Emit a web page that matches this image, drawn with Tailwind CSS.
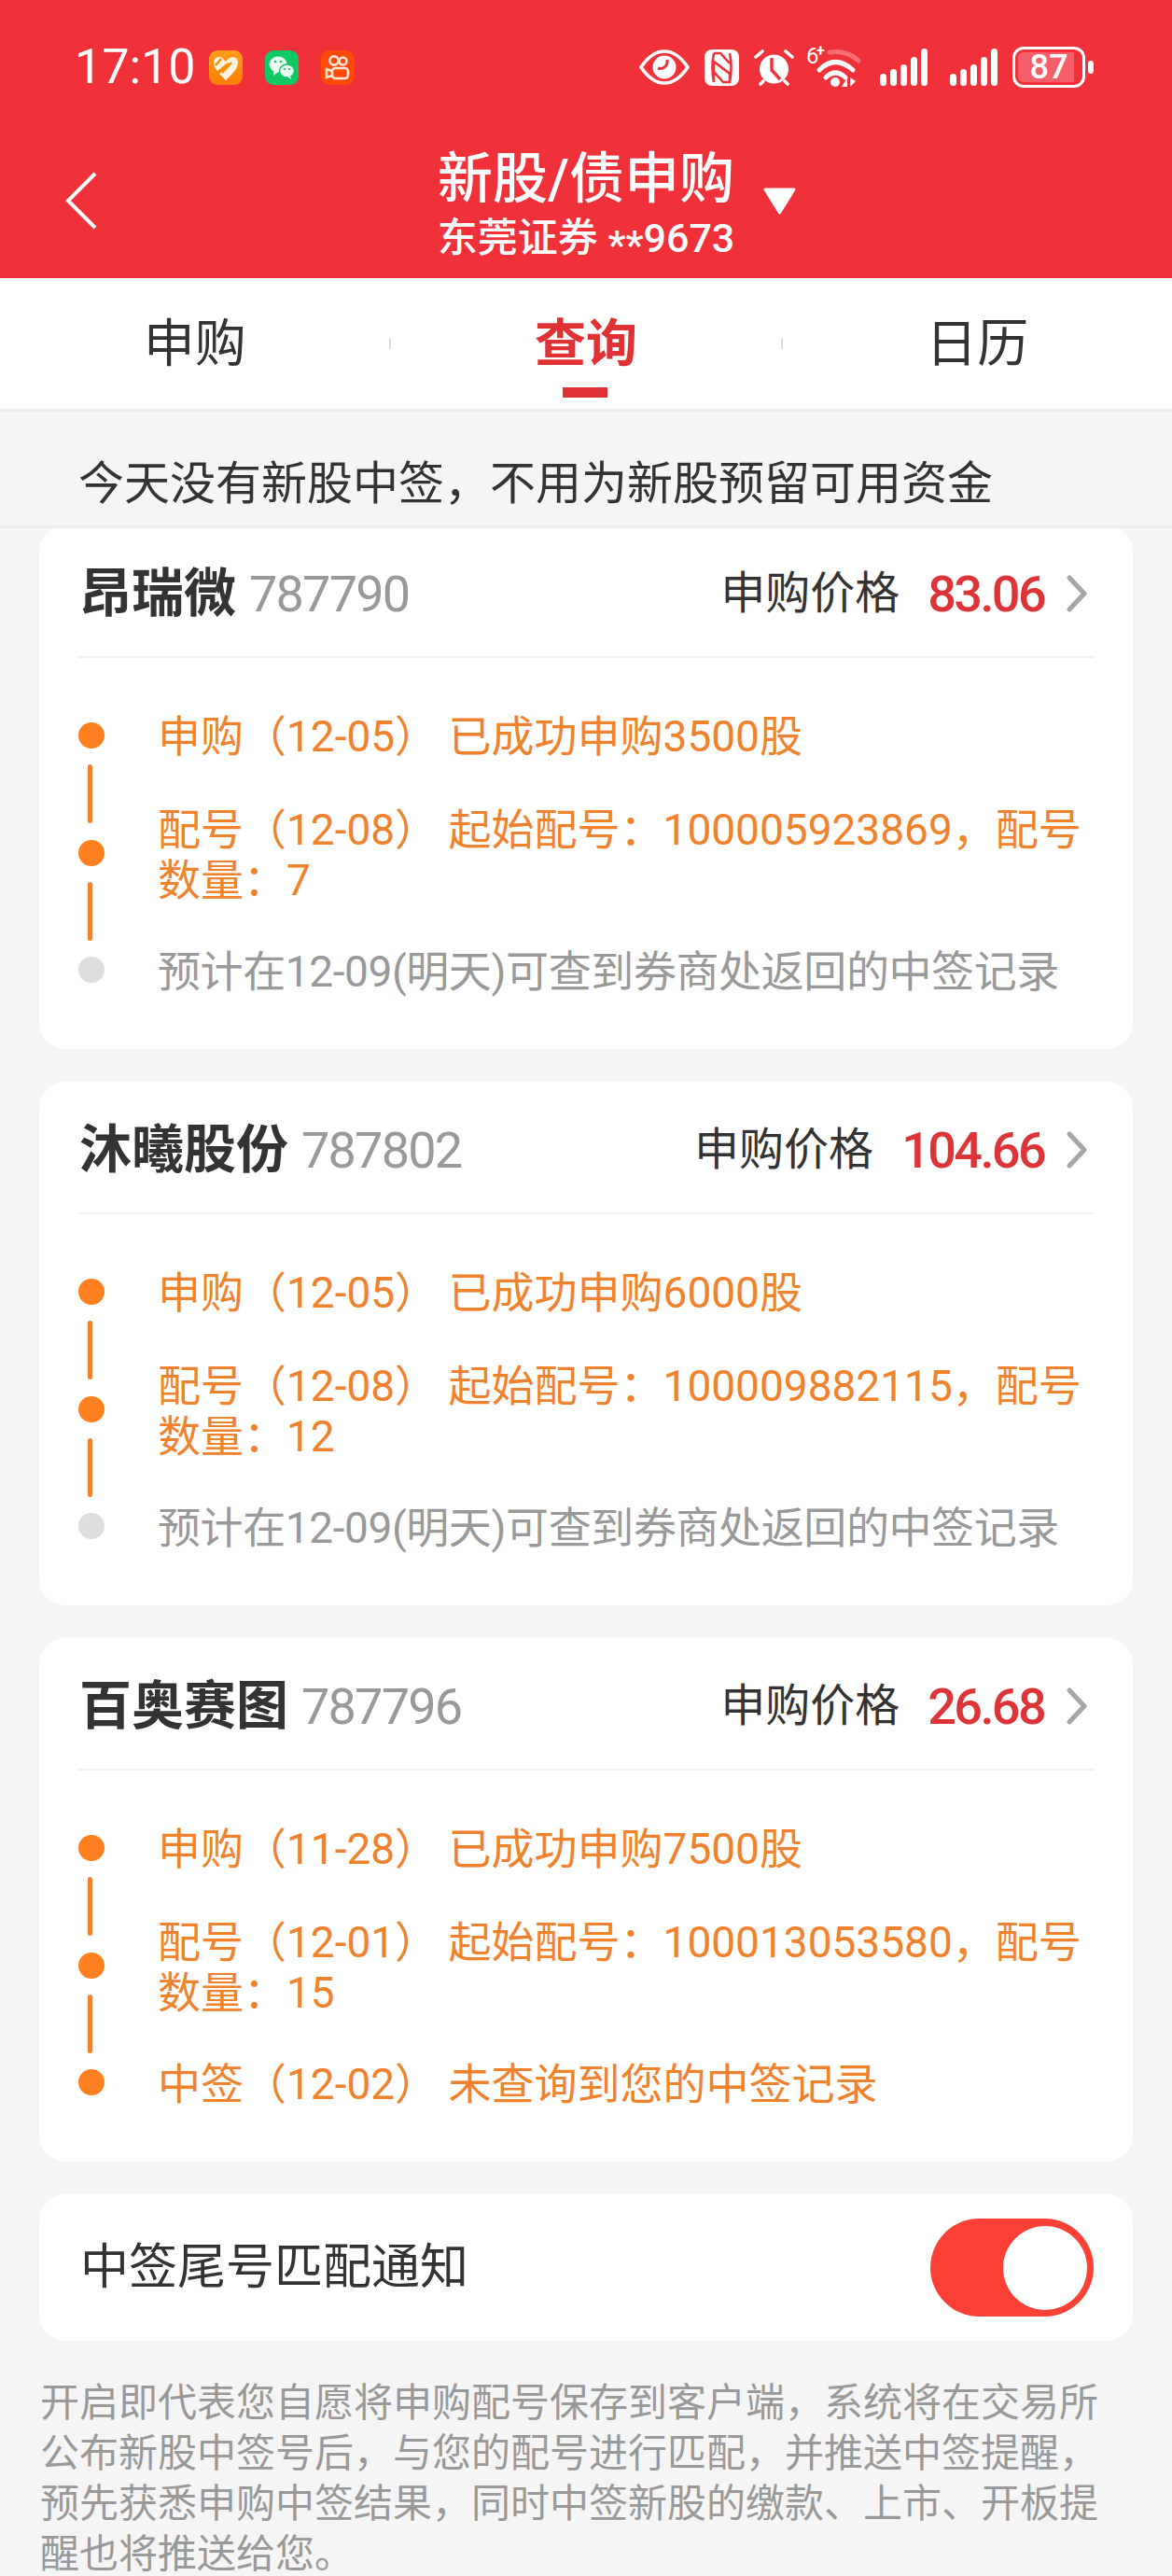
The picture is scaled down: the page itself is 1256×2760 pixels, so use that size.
<!DOCTYPE html>
<html lang="zh-CN">
<head>
    <meta charset="UTF-8">
    <title>新股/债申购</title>
    <script src="https://cdn.jsdelivr.net/npm/@tailwindcss/browser@4"></script>
</head>
<body class="bg-[#f5f5f5] font-['Roboto','Noto_Sans_CJK_SC',sans-serif] text-[#333]">
<div class="w-[1256px] h-[2760px] overflow-hidden flex flex-col">

    <!-- red header with status bar -->
    <header class="bg-[#f0313a] h-[298px] text-white shrink-0">
        <div class="h-[157px] pt-[50px] pl-[80px] pr-[84px]">
            <div class="h-[44px] flex items-center justify-between">
                <div class="flex items-center">
                    <span class="text-[52px] leading-[44px] mr-[14px]">17:10</span>
                    <div class="w-[36px] h-[37px] rounded-[9px] bg-gradient-to-b from-[#ff9d1e] to-[#ff7d00] mr-[24px]">
                        <svg viewBox="0 0 36 37" class="w-[36px] h-[37px]"><path d="M5 13 C5 6 13 5 16 10 L18 12 C22 5 31 6 31 13 C31 20 24 26 18 32 L11 25 L22 15 L20 13 L9 22 C6 19 5 16 5 13Z" fill="#fff4dc"/><path d="M13 9 L7 16 M24 13 L14 24" stroke="#ff8a0c" stroke-width="2.5"/></svg>
                    </div>
                    <div class="w-[36px] h-[37px] rounded-[9px] bg-[#10c965] mr-[24px]">
                        <svg viewBox="0 0 36 37" class="w-[36px] h-[37px]"><ellipse cx="14" cy="15" rx="9.5" ry="8.5" fill="#e8fff2"/><path d="M9 21 L9 27 L14 23Z" fill="#e8fff2"/><ellipse cx="23.5" cy="22" rx="8" ry="7" fill="#e8fff2" stroke="#10c965" stroke-width="1.5"/><path d="M27 27 L28 31 L24 28Z" fill="#e8fff2"/><circle cx="11" cy="12" r="1.3" fill="#10c965"/><circle cx="17" cy="12" r="1.3" fill="#10c965"/><circle cx="21" cy="20" r="1.1" fill="#10c965"/><circle cx="26" cy="20" r="1.1" fill="#10c965"/></svg>
                    </div>
                    <div class="w-[36px] h-[37px] rounded-[9px] bg-[#ff4906]">
                        <svg viewBox="0 0 36 37" class="w-[36px] h-[37px]" fill="none" stroke="#ffe6d6" stroke-width="2.6"><circle cx="14" cy="11" r="4.6"/><circle cx="23.5" cy="11.5" r="4"/><rect x="12" y="19" width="17" height="11" rx="3.5"/><path d="M12 22 L6 20 V29 L12 27"/></svg>
                    </div>
                </div>
                <div class="flex items-center">
                    <svg viewBox="0 0 54 38" class="w-[54px] h-[38px] mr-[16px]">
                        <path d="M2 19 C10 7 19 2 27 2 C35 2 44 7 52 19 C44 31 35 36 27 36 C19 36 10 31 2 19Z" fill="none" stroke="#fff" stroke-width="3.6"/>
                        <circle cx="27" cy="19" r="12.5" fill="#fff"/>
                        <path d="M20 20 C25 22 31 18 30 11" fill="none" stroke="#f0313a" stroke-width="3"/>
                    </svg>
                    <svg viewBox="0 0 37 39" class="w-[37px] h-[39px] mr-[16px]">
                        <rect width="37" height="39" rx="8" fill="#fff"/>
                        <path d="M10 4 C8 14 8 25 10 35 M27 4 C29 14 29 25 27 35 M10 4 H17 L27 15 M10 35 V13 L27 26 V35 H20 L10 24" fill="none" stroke="#f0313a" stroke-width="2.6"/>
                    </svg>
                    <svg viewBox="0 0 43 40" class="w-[43px] h-[40px] mr-[13px]">
                        <circle cx="21.5" cy="22" r="15.5" fill="#fff"/>
                        <path d="M19 10 V23 L28 33" fill="none" stroke="#f0313a" stroke-width="3.4"/>
                        <path d="M2 9 L9 3 M41 9 L34 3 M7 38 L10 35 M36 38 L33 35" stroke="#fff" stroke-width="3.6" stroke-linecap="round"/>
                    </svg>
                    <svg viewBox="0 0 58 42" class="w-[58px] h-[42px] mr-[21px] overflow-visible">
                        <text x="0" y="17" font-size="24" fill="#fff" font-family="Roboto">6</text>
                        <text x="11" y="9" font-size="16" font-weight="700" fill="#fff" font-family="Roboto">+</text>
                        <path d="M25 5 Q43 2 56 14" fill="none" stroke="#fff" stroke-opacity=".3" stroke-width="5" stroke-linecap="round"/>
                        <path d="M14 24 Q31 7 50 24 M21 32 Q31 22 42 32" fill="none" stroke="#fff" stroke-width="5" stroke-linecap="round"/>
                        <circle cx="31" cy="37" r="5" fill="#fff"/>
                        <path d="M44 42 V32 L38 42Z M47 32 V42 L53 36Z" fill="#fff"/>
                    </svg>
                    <svg viewBox="0 0 51 40" class="w-[51px] h-[40px] mr-[24px]" fill="#fff">
                        <rect x="0" y="27" width="7" height="13" rx="3.5"/><rect x="11" y="22" width="7" height="18" rx="3.5"/><rect x="22" y="17" width="7" height="23" rx="3.5"/><rect x="33" y="9" width="7" height="31" rx="3.5"/><rect x="44" y="0" width="7" height="40" rx="3.5"/>
                    </svg>
                    <svg viewBox="0 0 51 40" class="w-[51px] h-[40px] mr-[16px]" fill="#fff">
                        <rect x="0" y="27" width="7" height="13" rx="3.5"/><rect x="11" y="22" width="7" height="18" rx="3.5"/><rect x="22" y="17" width="7" height="23" rx="3.5"/><rect x="33" y="9" width="7" height="31" rx="3.5"/><rect x="44" y="0" width="7" height="40" rx="3.5"/>
                    </svg>
                    <div class="relative w-[78px] h-[44px] border-[3px] border-white rounded-[12px] p-[3px] mr-[3px]">
                        <div class="w-[60px] h-full bg-[#f65f6a] rounded-l-[6px]"></div>
                        <span class="absolute inset-0 flex items-center justify-center text-[36px] font-medium leading-none">87</span>
                    </div>
                    <div class="w-[6px] h-[14px] bg-white rounded-full"></div>
                </div>
            </div>
        </div>
        <div class="grid grid-cols-[1fr_auto_1fr]">
            <div class="pl-[70px] pt-[27px]">
                <svg viewBox="0 0 34 62" class="w-[34px] h-[62px]"><path d="M32 2 L3 31 L32 60" fill="none" stroke="#fff" stroke-width="4"/></svg>
            </div>
            <div class="text-center pt-[2px]">
                <div class="text-[59px] leading-[66px] font-medium">新股/债申购</div>
                <div class="text-[43px] leading-[60px] font-medium">东莞证券 <span class="relative top-[7px]">**</span>9673</div>
            </div>
            <div class="pl-[31px] pt-[44px]">
                <svg viewBox="0 0 35 29" class="w-[35px] h-[29px]"><path d="M2 2 H33 L17.5 27Z" fill="#fff" stroke="#fff" stroke-width="3" stroke-linejoin="round"/></svg>
            </div>
        </div>
    </header>

    <!-- tabs -->
    <nav class="h-[143px] shrink-0 bg-white border-b-[3px] border-[#ececec] flex items-center">
        <div class="flex-1 text-center text-[55px] leading-[146px]">申购</div>
        <div class="w-[2px] h-[11px] bg-[#ddd]"></div>
        <div class="relative flex-1 text-center text-[55px] leading-[146px] font-bold text-[#e03134]">
            查询
            <div class="absolute left-[184px] bottom-[15px] w-[48px] h-[11px] bg-[#e03134]"></div>
        </div>
        <div class="w-[2px] h-[11px] bg-[#ddd]"></div>
        <div class="flex-1 text-center text-[55px] leading-[146px]">日历</div>
    </nav>

    <!-- notice -->
    <div class="h-[125px] shrink-0 border-b-[3px] border-[#ececec] pl-[84px] text-[49px] leading-[156px] whitespace-nowrap">今天没有新股中签，不用为新股预留可用资金</div>

    <!-- list -->
    <main class="flex-1 overflow-hidden">
        <div class="-mt-[3px] mx-[42px] flex flex-col gap-[35px]">

            <section class="bg-white rounded-[28px] h-[561px] px-[42px]">
                <div class="h-[142px] pt-[6px] border-b-2 border-[#f2f2f2] flex items-center justify-between">
                    <div class="flex items-center pl-[1px]">
                        <span class="text-[56px] font-bold mr-[14px]">昂瑞微</span>
                        <span class="text-[54px] text-[#999] tracking-[-1.8px]">787790</span>
                    </div>
                    <div class="flex items-center">
                        <span class="text-[48px] mr-[30px]">申购价格</span>
                        <span class="text-[54px] font-medium text-[#dd3437] tracking-[-2.6px] mr-[24px]">83.06</span>
                        <svg viewBox="0 0 22 40" class="w-[22px] h-[40px] mr-[7px]"><path d="M3 3 L19 20 L3 37" fill="none" stroke="#a6a6a6" stroke-width="5" stroke-linecap="round" stroke-linejoin="round"/></svg>
                    </div>
                </div>
                <div class="flex">
                    <div class="w-[28px] mt-[69px] flex flex-col items-center">
                        <div class="w-[28px] h-[28px] rounded-full bg-[#ff7f21]"></div>
                        <div class="w-[5px] h-[63px] mt-[17px] mb-[18px] -ml-[3px] rounded-full bg-[#f0822d]"></div>
                        <div class="w-[28px] h-[28px] rounded-full bg-[#ff7f21]"></div>
                        <div class="w-[5px] h-[63px] mt-[17px] mb-[17px] -ml-[3px] rounded-full bg-[#f0822d]"></div>
                        <div class="w-[28px] h-[28px] rounded-full bg-[#dddddd]"></div>
                    </div>
                    <div class="ml-[57px] mt-[57px] text-[46px] leading-[54px] whitespace-nowrap">
                        <div class="text-[#f0822d]">申购（12-05） 已成功申购3500股</div>
                        <div class="text-[#f0822d] mt-[46px]">配号（12-08） 起始配号：100005923869，配号<br>数量：7</div>
                        <div class="text-[#999] mt-[44px] tracking-[-0.4px]">预计在12-09(明天)可查到券商处返回的中签记录</div>
                    </div>
                </div>
            </section>

            <section class="bg-white rounded-[28px] h-[561px] px-[42px]">
                <div class="h-[142px] pt-[6px] border-b-2 border-[#f2f2f2] flex items-center justify-between">
                    <div class="flex items-center pl-[1px]">
                        <span class="text-[56px] font-bold mr-[14px]">沐曦股份</span>
                        <span class="text-[54px] text-[#999] tracking-[-1.8px]">787802</span>
                    </div>
                    <div class="flex items-center">
                        <span class="text-[48px] mr-[30px]">申购价格</span>
                        <span class="text-[54px] font-medium text-[#dd3437] tracking-[-2.6px] mr-[24px]">104.66</span>
                        <svg viewBox="0 0 22 40" class="w-[22px] h-[40px] mr-[7px]"><path d="M3 3 L19 20 L3 37" fill="none" stroke="#a6a6a6" stroke-width="5" stroke-linecap="round" stroke-linejoin="round"/></svg>
                    </div>
                </div>
                <div class="flex">
                    <div class="w-[28px] mt-[69px] flex flex-col items-center">
                        <div class="w-[28px] h-[28px] rounded-full bg-[#ff7f21]"></div>
                        <div class="w-[5px] h-[63px] mt-[17px] mb-[18px] -ml-[3px] rounded-full bg-[#f0822d]"></div>
                        <div class="w-[28px] h-[28px] rounded-full bg-[#ff7f21]"></div>
                        <div class="w-[5px] h-[63px] mt-[17px] mb-[17px] -ml-[3px] rounded-full bg-[#f0822d]"></div>
                        <div class="w-[28px] h-[28px] rounded-full bg-[#dddddd]"></div>
                    </div>
                    <div class="ml-[57px] mt-[57px] text-[46px] leading-[54px] whitespace-nowrap">
                        <div class="text-[#f0822d]">申购（12-05） 已成功申购6000股</div>
                        <div class="text-[#f0822d] mt-[46px]">配号（12-08） 起始配号：100009882115，配号<br>数量：12</div>
                        <div class="text-[#999] mt-[44px] tracking-[-0.4px]">预计在12-09(明天)可查到券商处返回的中签记录</div>
                    </div>
                </div>
            </section>

            <section class="bg-white rounded-[28px] h-[561px] px-[42px]">
                <div class="h-[142px] pt-[6px] border-b-2 border-[#f2f2f2] flex items-center justify-between">
                    <div class="flex items-center pl-[1px]">
                        <span class="text-[56px] font-bold mr-[14px]">百奥赛图</span>
                        <span class="text-[54px] text-[#999] tracking-[-1.8px]">787796</span>
                    </div>
                    <div class="flex items-center">
                        <span class="text-[48px] mr-[30px]">申购价格</span>
                        <span class="text-[54px] font-medium text-[#dd3437] tracking-[-2.6px] mr-[24px]">26.68</span>
                        <svg viewBox="0 0 22 40" class="w-[22px] h-[40px] mr-[7px]"><path d="M3 3 L19 20 L3 37" fill="none" stroke="#a6a6a6" stroke-width="5" stroke-linecap="round" stroke-linejoin="round"/></svg>
                    </div>
                </div>
                <div class="flex">
                    <div class="w-[28px] mt-[69px] flex flex-col items-center">
                        <div class="w-[28px] h-[28px] rounded-full bg-[#ff7f21]"></div>
                        <div class="w-[5px] h-[63px] mt-[17px] mb-[18px] -ml-[3px] rounded-full bg-[#f0822d]"></div>
                        <div class="w-[28px] h-[28px] rounded-full bg-[#ff7f21]"></div>
                        <div class="w-[5px] h-[63px] mt-[17px] mb-[17px] -ml-[3px] rounded-full bg-[#f0822d]"></div>
                        <div class="w-[28px] h-[28px] rounded-full bg-[#ff7f21]"></div>
                    </div>
                    <div class="ml-[57px] mt-[57px] text-[46px] leading-[54px] whitespace-nowrap text-[#f0822d]">
                        <div>申购（11-28） 已成功申购7500股</div>
                        <div class="mt-[46px]">配号（12-01） 起始配号：100013053580，配号<br>数量：15</div>
                        <div class="mt-[44px]">中签（12-02） 未查询到您的中签记录</div>
                    </div>
                </div>
            </section>

            <section class="bg-white rounded-[28px] h-[157px] pl-[44px] pr-[42px] flex items-center justify-between">
                <span class="text-[52px]">中签尾号匹配通知</span>
                <div class="w-[175px] h-[105px] rounded-full bg-[#fb4136] flex justify-end items-center pr-[7px]">
                    <div class="w-[90px] h-[90px] rounded-full bg-white"></div>
                </div>
            </section>
        </div>

        <p class="mx-[43px] mt-[40px] w-[1140px] text-[42px] leading-[54px] text-[#999]">开启即代表您自愿将申购配号保存到客户端，系统将在交易所<br>公布新股中签号后，与您的配号进行匹配，并推送中签提醒，<br>预先获悉申购中签结果，同时中签新股的缴款、上市、开板提<br>醒也将推送给您。</p>
    </main>
</div>
</body>
</html>
